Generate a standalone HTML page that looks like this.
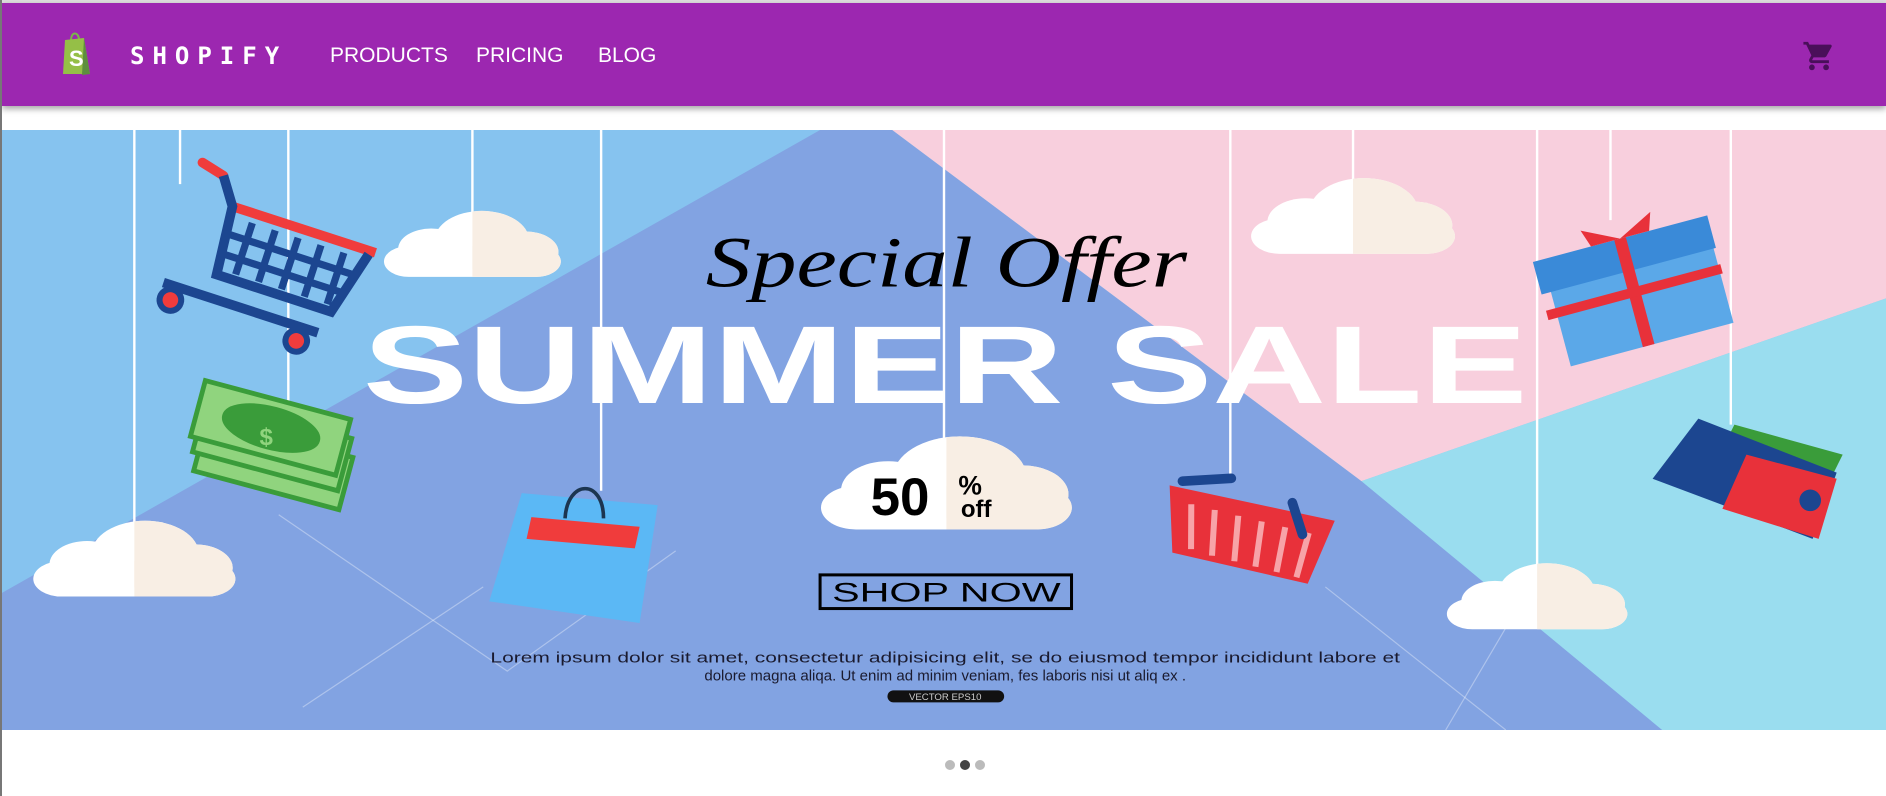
<!DOCTYPE html>
<html><head><meta charset="utf-8"><style>
html,body{margin:0;padding:0;width:1886px;height:796px;overflow:hidden;background:#fff;font-family:"Liberation Sans",sans-serif}
.edge{position:absolute;left:0;top:0;width:2px;height:796px;background:#777}
.nav{position:absolute;left:2px;top:3px;width:1884px;height:103px;background:#9C27B0;box-shadow:0 3px 6px rgba(0,0,0,.35)}
.topline{position:absolute;left:0;top:0;width:1886px;height:3px;background:#ddd}
.brand{position:absolute;left:128px;top:39px;font-family:"DejaVu Sans Mono","Liberation Mono",monospace;font-weight:bold;font-size:24px;letter-spacing:8px;color:#fff}
.lnk{position:absolute;top:41px;font-size:21px;color:#fff}
.banner{position:absolute;left:2px;top:130px}
.dot{position:absolute;top:760px;width:10px;height:10px;border-radius:50%;background:#bbb}
</style></head><body>
<div class="topline"></div>
<div class="nav">
<svg style="position:absolute;left:60px;top:27px" width="28" height="46" viewBox="0 0 28 46">
<path d="M9 10 C9 2 16 1 17 9" fill="none" stroke="#7ab648" stroke-width="2"/>
<path d="M3 10 L22 8 L28 44 L1 44 Z" fill="#95bf47"/>
<path d="M22 8 L28 44 L20 45 Z" fill="#5e8e3e"/>
<text x="7" y="36" font-family="Liberation Sans" font-weight="bold" font-size="22" fill="#fff">S</text>
</svg>
<div class="brand">SHOPIFY</div>
<div class="lnk" style="left:328px">PRODUCTS</div>
<div class="lnk" style="left:474px">PRICING</div>
<div class="lnk" style="left:596px">BLOG</div>
<svg style="position:absolute;left:1800px;top:36px" width="34" height="34" viewBox="0 0 24 24"><path fill="#4a0f5a" d="M7 18c-1.1 0-2 .9-2 2s.9 2 2 2 2-.9 2-2-.9-2-2-2zM1 2v2h2l3.6 7.59-1.35 2.450c-.16.28-.25.61-.25.96 0 1.1.9 2 2 2h12v-2H7.42c-.14 0-.25-.11-.25-.25l.03-.12.9-1.63h7.45c.75 0 1.41-.41 1.75-1.03l3.58-6.49A1 1 0 0 0 20 4H5.21l-.94-2H1zm16 16c-1.1 0-2 .9-2 2s.9 2 2 2 2-.9 2-2-.9-2-2-2z"/></svg>
</div>
<div class="edge"></div>
<svg class="banner" width="1884" height="600" viewBox="0 0 1566 499" preserveAspectRatio="none" font-family="Liberation Sans">
<defs>
<g id="cl"><rect x="-75" y="-22" width="150" height="42" rx="21"/><circle cx="-35" cy="-18" r="28"/><circle cx="8" cy="-30" r="40"/><circle cx="45" cy="-14" r="28"/></g>
<clipPath id="rh"><rect x="0" y="-100" width="100" height="200"/></clipPath>
</defs>
<rect width="1566" height="499" fill="#86C3EF"/>
<polygon points="680,0 740,0 1130,292 1380,499 0,499 0,385" fill="#82A3E2"/>
<polygon points="740,0 1566,0 1566,140 1130,292" fill="#F8CFDD"/>
<polygon points="1130,292 1566,140 1566,499 1380,499" fill="#9ADDEF"/>
<g stroke="#fff" stroke-width="2">
<line x1="110" y1="0" x2="110" y2="345"/><line x1="148" y1="0" x2="148" y2="45"/><line x1="238" y1="0" x2="238" y2="230"/>
<line x1="391" y1="0" x2="391" y2="70"/><line x1="498" y1="0" x2="498" y2="300"/><line x1="783" y1="0" x2="783" y2="260"/>
<line x1="1021" y1="0" x2="1021" y2="290"/><line x1="1123" y1="0" x2="1123" y2="45"/><line x1="1276" y1="0" x2="1276" y2="365"/>
<line x1="1337" y1="0" x2="1337" y2="75"/><line x1="1437" y1="0" x2="1437" y2="245"/></g>
<g stroke="#fff" stroke-opacity=".35" stroke-width="1" fill="none">
<path d="M230 320 L420 450 L560 350"/><path d="M250 480 L400 380"/><path d="M1100 380 L1250 499"/><path d="M1270 380 L1200 499"/>
</g>
<!-- clouds -->
<g transform="translate(391,110) scale(0.98,0.61)"><use href="#cl" fill="#fff"/><g clip-path="url(#rh)"><use href="#cl" fill="#f8eee4"/></g></g>
<g transform="translate(110,374) scale(1.12,0.7)"><use href="#cl" fill="#fff"/><g clip-path="url(#rh)"><use href="#cl" fill="#f8eee4"/></g></g>
<g transform="translate(1123,89) scale(1.13,0.7)"><use href="#cl" fill="#fff"/><g clip-path="url(#rh)"><use href="#cl" fill="#f8eee4"/></g></g>
<g transform="translate(1276,403) scale(1.0,0.61)"><use href="#cl" fill="#fff"/><g clip-path="url(#rh)"><use href="#cl" fill="#f8eee4"/></g></g>
<g transform="translate(785,315) scale(1.39,0.86)"><use href="#cl" fill="#fff"/><g clip-path="url(#rh)"><use href="#cl" fill="#f8eee4"/></g></g>
<text x="722" y="320" font-weight="bold" font-size="44" fill="#000">50</text><text x="795" y="303" font-weight="bold" font-size="22">%</text><text x="797" y="322" font-weight="bold" font-size="20">off</text>
<!-- cart -->
<g transform="rotate(18 210 120)"><line x1="140" y1="45" x2="160" y2="50" stroke="#f03c3c" stroke-width="8" stroke-linecap="round"/>
<line x1="175" y1="72" x2="300" y2="72" stroke="#f03c3c" stroke-width="8"/><path d="M160 50 L175 72 L180 130 L280 130 L295 75" fill="none" stroke="#1c4690" stroke-width="8"/>
<path d="M195 80 V125 M215 80 V125 M235 80 V125 M255 80 V125 M275 80 V125 M180 95 H290 M180 112 H285" stroke="#1c4690" stroke-width="6"/>
<path d="M140 150 H275" stroke="#1c4690" stroke-width="8"/><circle cx="150" cy="162" r="9" fill="#f03c3c" stroke="#1c4690" stroke-width="5"/><circle cx="260" cy="162" r="9" fill="#f03c3c" stroke="#1c4690" stroke-width="5"/></g>
<!-- money -->
<g transform="rotate(15 225 270)" fill="#90d47e" stroke="#3a9c3a" stroke-width="4"><rect x="165" y="255" width="125" height="45"/><rect x="160" y="240" width="125" height="45"/><rect x="155" y="225" width="125" height="48"/><ellipse cx="218" cy="249" rx="40" ry="16" fill="#3a9c3a"/></g>
<text x="214" y="262" font-size="20" font-weight="bold" fill="#90d47e">$</text>
<!-- bag -->
<polygon points="432,302 545,312 530,410 405,392" fill="#5BB8F5"/><polygon points="440,322 530,330 526,348 436,340" fill="#f03c3c"/>
<path d="M468 323 C470 290 500 290 500 323" fill="none" stroke="#1c3550" stroke-width="3"/>
<!-- basket -->
<g transform="rotate(8 1035 340)"><polygon points="965,305 1105,315 1090,370 975,360" fill="#e8313a"/><path d="M985 318 L990 355 M1005 320 L1008 358 M1025 322 L1027 360 M1045 324 L1045 362 M1065 326 L1063 364 M1085 328 L1080 366" stroke="#f7a3a8" stroke-width="5"/><line x1="975" y1="300" x2="1015" y2="292" stroke="#1c4690" stroke-width="8" stroke-linecap="round"/><line x1="1068" y1="305" x2="1080" y2="330" stroke="#1c4690" stroke-width="8" stroke-linecap="round"/></g>
<!-- gift -->
<g transform="rotate(-15 1360 135)"><rect x="1290" y="95" width="140" height="85" fill="#5BA8E8"/><rect x="1282" y="88" width="150" height="28" fill="#3a8ad8"/><rect x="1352" y="88" width="10" height="92" fill="#e8313a"/><rect x="1282" y="130" width="150" height="8" fill="#e8313a"/><path d="M1357 88 l-30 -15 l5 15z M1357 88 l30 -15 l-5 15z" fill="#e8313a"/></g>
<!-- wallet -->
<polygon points="1440,245 1530,270 1520,290 1430,265" fill="#3a9c3a"/><polygon points="1410,240 1525,285 1505,340 1372,290" fill="#1c4690"/><polygon points="1450,270 1525,290 1510,340 1430,315" fill="#e8313a"/><circle cx="1503" cy="308" r="9" fill="#1c4690"/>
<!-- text -->
<text x="785" y="130" text-anchor="middle" font-family="Liberation Serif" font-style="italic" font-size="60" fill="#000" textLength="400" lengthAdjust="spacingAndGlyphs">Special Offer</text>
<text x="300" y="227" font-weight="bold" font-size="92" fill="#fff" textLength="968" lengthAdjust="spacingAndGlyphs">SUMMER SALE</text>
<rect x="680" y="370" width="209" height="28" fill="none" stroke="#000" stroke-width="2.5"/>
<text x="785" y="392" text-anchor="middle" font-size="22" fill="#000" textLength="190" lengthAdjust="spacingAndGlyphs">SHOP NOW</text>
<text x="784" y="443" text-anchor="middle" font-size="12.5" fill="#1a1a2e" textLength="756" lengthAdjust="spacingAndGlyphs">Lorem ipsum dolor sit amet, consectetur adipisicing elit, se  do eiusmod tempor incididunt  labore et</text>
<text x="784" y="458" text-anchor="middle" font-size="12.5" fill="#1a1a2e">dolore magna aliqa.   Ut enim ad minim veniam, fes  laboris nisi ut aliq ex .</text>
<rect x="736" y="466" width="97" height="10" rx="5" fill="#111"/><text x="784" y="474" text-anchor="middle" font-size="8" fill="#ccc">VECTOR EPS10</text>
</svg>
<div class="dot" style="left:945px"></div><div class="dot" style="left:960px;background:#444"></div><div class="dot" style="left:975px"></div>
</body></html>
